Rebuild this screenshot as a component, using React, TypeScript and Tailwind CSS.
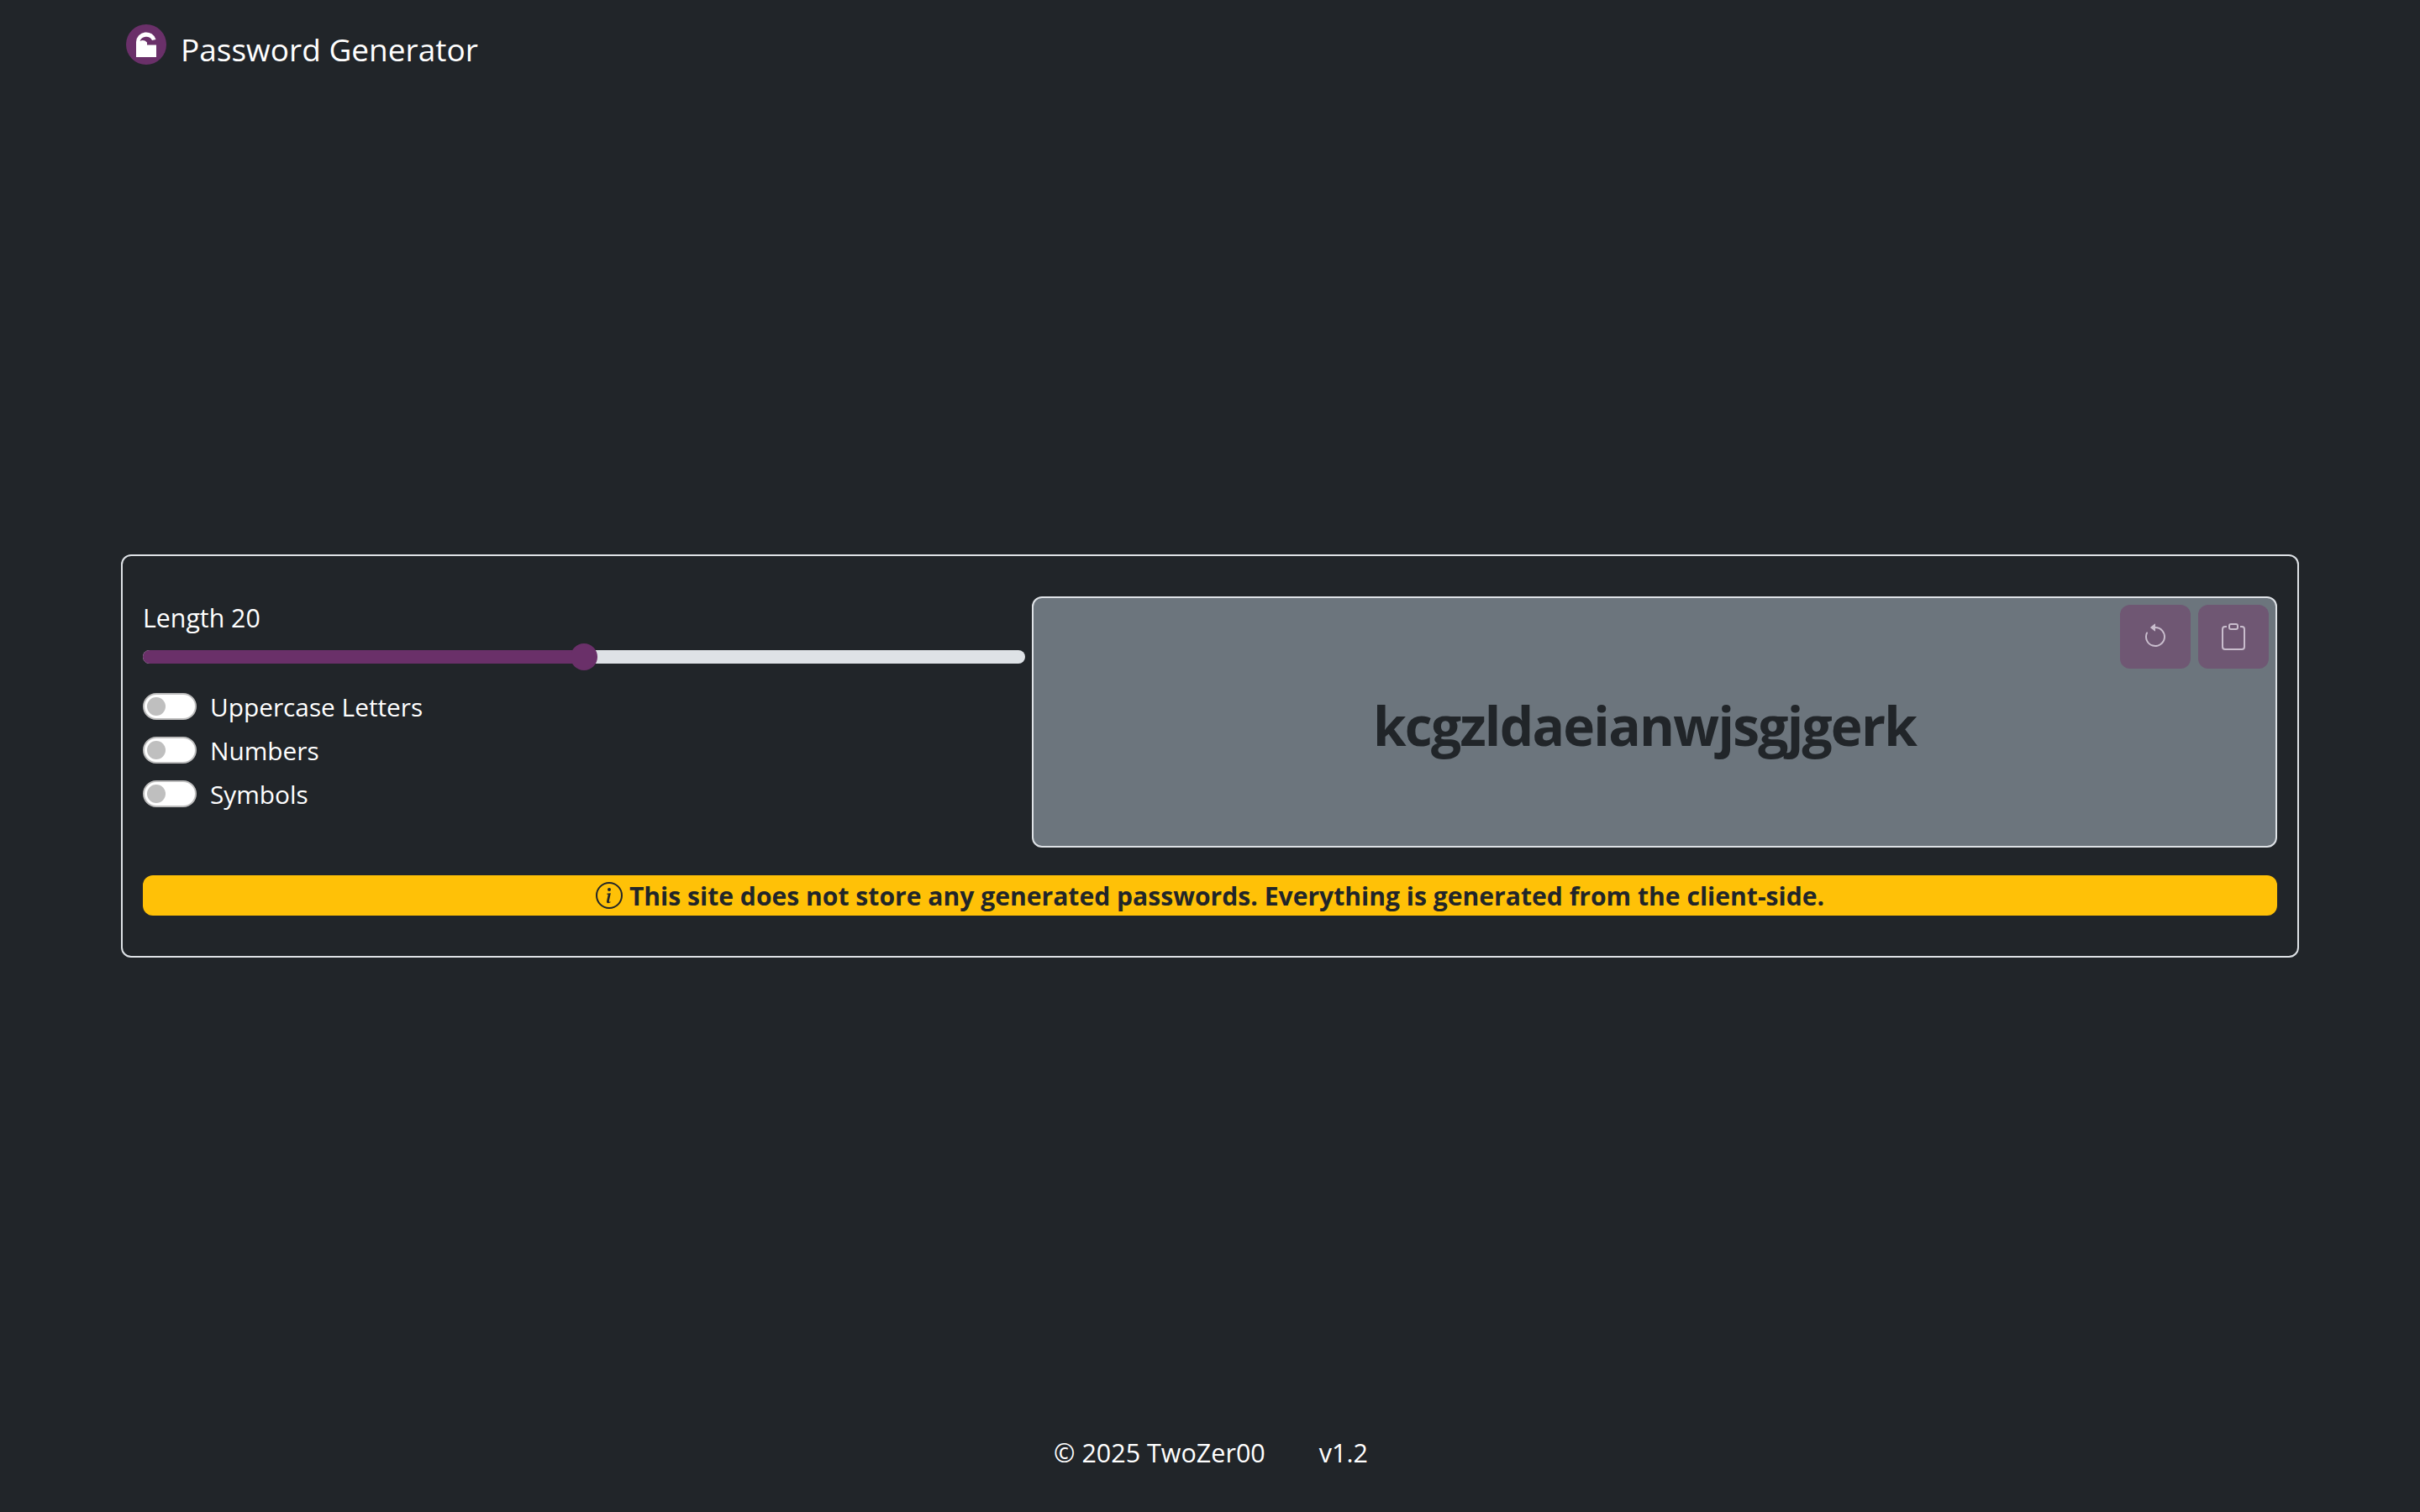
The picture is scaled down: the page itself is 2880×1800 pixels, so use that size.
import React from 'react';

const Logo = () => (
    <svg viewBox="0 0 48 48" className="w-12 h-12 shrink-0">
        <circle cx="24" cy="24" r="24" fill="#6a3069" />
        <path d="M12 39V21A12 12 0 0 1 35.5 18L31 19A8 8 0 0 0 16.5 20Q21 17.5 25 21.5V24.5H36V39Z" fill="#fff" />
    </svg>
);

const InfoIcon = () => (
    <svg viewBox="0 0 16 16" fill="currentColor" className="w-8 h-8 inline-block mr-2">
        <path d="M8 15A7 7 0 1 1 8 1a7 7 0 0 1 0 14m0 1A8 8 0 1 0 8 0a8 8 0 0 0 0 16" />
        <path d="m8.93 6.588-2.29.287-.082.38.45.083c.294.07.352.176.288.469l-.738 3.468c-.194.897.105 1.319.808 1.319.545 0 1.178-.252 1.465-.598l.088-.416c-.2.176-.492.246-.686.246-.275 0-.375-.193-.304-.533zM9 4.5a1 1 0 1 1-2 0 1 1 0 0 1 2 0" />
    </svg>
);

const ResetIcon = () => (
    <svg viewBox="0 0 16 16" fill="currentColor" className="w-8 h-8">
        <path fillRule="evenodd" d="M8 3a5 5 0 1 1-4.546 2.914.5.5 0 0 0-.908-.417A6 6 0 1 0 8 2z" />
        <path d="M8 4.466V.534a.25.25 0 0 0-.41-.192L5.23 2.308a.25.25 0 0 0 0 .384l2.36 1.966A.25.25 0 0 0 8 4.466" />
    </svg>
);

const ClipboardIcon = () => (
    <svg viewBox="0 0 16 16" fill="currentColor" className="w-8 h-8">
        <path d="M4 1.5H3a2 2 0 0 0-2 2V14a2 2 0 0 0 2 2h10a2 2 0 0 0 2-2V3.5a2 2 0 0 0-2-2h-1v1h1a1 1 0 0 1 1 1V14a1 1 0 0 1-1 1H3a1 1 0 0 1-1-1V3.5a1 1 0 0 1 1-1h1z" />
        <path d="M9.5 1a.5.5 0 0 1 .5.5v1a.5.5 0 0 1-.5.5h-3a.5.5 0 0 1-.5-.5v-1a.5.5 0 0 1 .5-.5zm-3-1A1.5 1.5 0 0 0 5 1.5v1A1.5 1.5 0 0 0 6.5 4h3A1.5 1.5 0 0 0 11 2.5v-1A1.5 1.5 0 0 0 9.5 0z" />
    </svg>
);

const Toggle = ({ label }: { label: string }) => (
    <div className="flex items-center h-12 mb-1 gap-4">
        <div className="w-16 h-8 rounded-full bg-white border-2 border-[#bdbdbd] flex items-center pl-[3px]">
            <div className="w-[22px] h-[22px] rounded-full bg-[#bfbfbf]" />
        </div>
        <span className="text-[29.8px] pt-0.5">{label}</span>
    </div>
);

const IconButton = ({ children }: { children: React.ReactNode }) => (
    <button className="w-[84px] h-[76px] rounded-xl bg-[#6f5773] text-[#c9bdcd] flex items-center justify-center">
        {children}
    </button>
);

export default function App() {
    return (
        <div className="min-h-screen grid grid-rows-[1fr_auto_1fr] bg-[#212529] text-white font-['Open_Sans',sans-serif]">
            <header className="flex items-start gap-[17px] px-[150px] pt-[29px]">
                <Logo />
                <span className="text-[37px] leading-[60px]">Password Generator</span>
            </header>

            <main className="mx-36 border-2 border-[#dee2e6] rounded-xl px-6 pt-12 pb-12">
                <div className="flex gap-2">
                    <div className="w-[1050px] shrink-0 pt-0.5">
                        <label className="block text-[30.3px] leading-[48px]">Length 20</label>
                        <div className="relative h-4 mt-3.5 mb-[27px] rounded-full bg-[#dee2e6]">
                            <div className="h-4 w-[525px] rounded-full bg-[#6a3069]" />
                            <div className="absolute left-[509px] -top-2 w-8 h-8 rounded-full bg-[#6a3069]" />
                        </div>
                        <Toggle label="Uppercase Letters" />
                        <Toggle label="Numbers" />
                        <Toggle label="Symbols" />
                    </div>
                    <div className="relative flex-1 h-[299px] rounded-xl border-2 border-[#dee2e6] bg-[#6c757d] flex items-center justify-center pt-2 pr-6">
                        <div className="absolute top-2 right-2 flex gap-[9px]">
                            <IconButton><ResetIcon /></IconButton>
                            <IconButton><ClipboardIcon /></IconButton>
                        </div>
                        <span className="text-[64px] tracking-[-1.75px] font-bold text-[#212529]">kcgzldaeianwjsgjgerk</span>
                    </div>
                </div>
                <div className="mt-[33px] h-12 rounded-xl bg-[#ffc107] text-[#212529] text-[30.1px] font-bold flex items-center justify-center">
                    <InfoIcon />
                    <span className="pt-0.5">This site does not store any generated passwords. Everything is generated from the client-side.</span>
                </div>
            </main>

            <footer className="self-end flex justify-center gap-16 pb-[47px] pl-0.5 text-[30.5px] leading-[48px]">
                <span>© 2025 TwoZer00</span>
                <span>v1.2</span>
            </footer>
        </div>
    );
}
